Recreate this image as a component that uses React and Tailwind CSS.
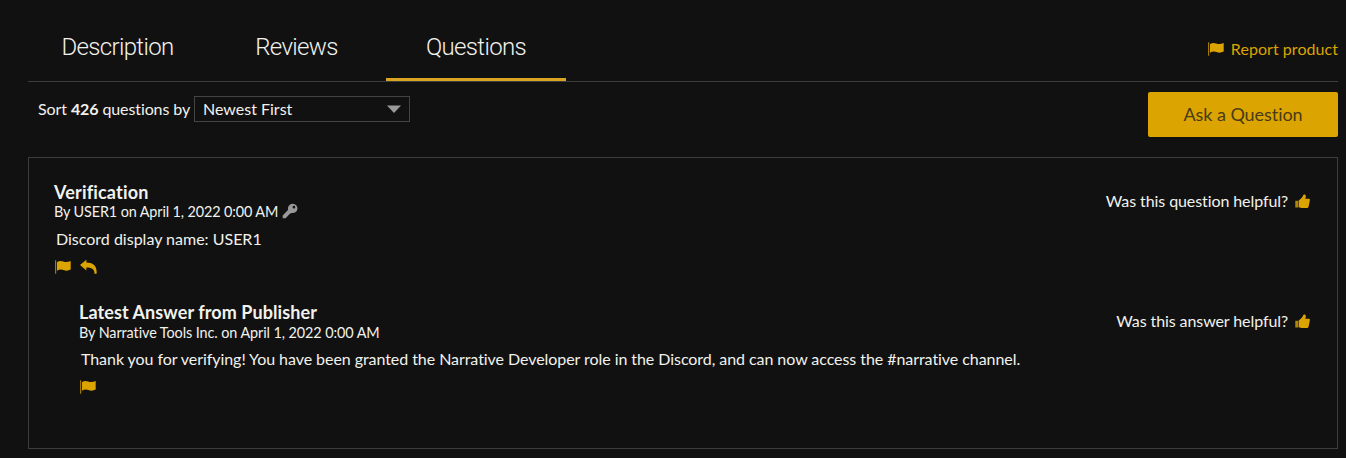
const Icon = ({ children, className = '', size = 16 }) => (
  <svg viewBox="0 0 16 16" width={size} height={size} fill="currentColor" className={'shrink-0 ' + className}>{children}</svg>
);
const Flag = ({ className = '' }) => (
  <Icon className={className}>
    <path opacity=".7" d="M0 1.200h1.200v13.600H0z" />
    <path d="M2 3.200C4.200 1.700 6 1.800 8.300 2.600c2.200.8 4.700.7 7.400-.6v8.600c-2.600 1.400-5 1.300-7.200.5-2.200-.8-4.300-.7-6.500.6z" />
  </Icon>
);
const Reply = ({ className = '' }) => (
  <Icon className={className} size={17}>
    <path d="M0 5.600 6 .8v2.400c6.200 0 10.300 3.200 9.600 10.600h-2c.1-4.300-3-5.700-7.600-5.700v2.800z" />
  </Icon>
);
const Thumb = ({ className = '' }) => (
  <Icon className={className} size={15}>
    <path opacity=".8" d="M.3 7.200h3.300v7.200H.3z" />
    <path d="M4.100 6.700C6.200 5.700 8.100 3.500 8.700 1.400c.4-1.500 2.900-1.200 2.900.9 0 1.200-.4 2-.8 2.700h3.700c1.300 0 1.600.9 1.300 2l-1.200 6c-.3 1.400-1 1.900-2.300 1.900H8c-1.600 0-2.500-.4-3.900-.8z" />
  </Icon>
);
const Key = ({ className = '' }) => (
  <Icon className={className}>
    <path fillRule="evenodd" d="M10.600.7a4.700 4.700 0 1 1-1.200 9.200L7.600 11l-3 3.200-1 1.100H.7v-2.900l5.500-5.600A4.700 4.700 0 0 1 10.600.7zm1.300 2.100a1.300 1.300 0 1 0 .1 2.600 1.300 1.300 0 0 0-.1-2.600z" />
  </Icon>
);

export default function App() {
  return (
    <main className="h-[458px] w-[1346px] overflow-hidden bg-[#111] pl-7 pr-2 font-['Lato',sans-serif] text-base leading-5 -tracking-[0.06px] text-[#f2f2ed] [font-variant-ligatures:none]">
      <header className="flex h-[82px] items-end justify-between border-b border-[#3d3d3d]">
        <nav className="flex font-['Roboto','Inter',sans-serif] text-2xl font-light leading-7 -tracking-[0.65px]">
          <a className="flex h-12 w-[179px] justify-center whitespace-nowrap">Description</a>
          <a className="flex h-12 w-[179px] justify-center whitespace-nowrap">Reviews</a>
          <a className="flex h-12 w-[180px] justify-center whitespace-nowrap border-b-[3px] border-[#daa520]">Questions</a>
        </nav>
        <a className="mb-[22px] flex items-center gap-[7px] tracking-[0.05px] text-[#dba400]"><Flag /><span>Report product</span></a>
      </header>
      <div className="flex h-[75px] items-start justify-between pl-[10px]">
        <div className="mt-[14px] flex h-[26px] items-center gap-1">
          <span className="w-[152px] whitespace-nowrap -tracking-[0.1px]">Sort <b>426</b> questions by</span>
          <button className="flex h-[26px] w-[216px] items-center justify-between border border-[#444] pl-2 pr-2">
            <span className="tracking-normal">Newest First</span>
            <svg width="14" height="8" viewBox="0 0 14 8" fill="#999"><path d="M0 .5h14L7 8z" /></svg>
          </button>
        </div>
        <button className="mt-[10px] h-[45px] w-[190px] rounded-[2px] bg-[#dba400] pb-[2px] text-lg text-[#493b18]">Ask a Question</button>
      </div>
      <section className="h-[292px] border border-[#3d3d3d] pl-[25px] pr-[27px] pt-6">
        <article className="flex h-[120px] justify-between">
          <div>
            <h2 className="text-lg font-bold leading-5 tracking-[0.17px]">Verification</h2>
            <p className="flex items-center gap-1 text-[14.400px] leading-5 -tracking-[0.11px]"><span>By USER1 on April 1, 2022 0:00 AM</span><Key className="-mt-[2px] text-[#999]" /></p>
            <p className="mt-[7px] pl-[2px] tracking-normal">Discord display name: USER1</p>
            <div className="mt-[10px] flex gap-[9px] pl-px text-[#dba400]"><Flag /><Reply /></div>
          </div>
          <div className="mt-[9px] flex h-5 items-center gap-[7px]"><span className="-tracking-[0.09px]">Was this question helpful?</span><Thumb className="text-[#dba400]" /></div>
        </article>
        <article className="flex justify-between pl-[25px]">
          <div>
            <h2 className="text-lg font-bold leading-5 tracking-[0.08px]">Latest Answer from Publisher</h2>
            <p className="mt-px text-[14.400px] leading-5 -tracking-[0.08px]">By Narrative Tools Inc. on April 1, 2022 0:00 AM</p>
            <p className="mt-[6px] pl-[2px]">Thank you for verifying! You have been granted the Narrative Developer role in the Discord, and can now access the #narrative channel.</p>
            <div className="mt-[10px] flex pl-px text-[#dba400]"><Flag /></div>
          </div>
          <div className="mt-[9px] flex h-5 items-center gap-[7px]"><span className="-tracking-[0.09px]">Was this answer helpful?</span><Thumb className="text-[#dba400]" /></div>
        </article>
      </section>
    </main>
  );
}
